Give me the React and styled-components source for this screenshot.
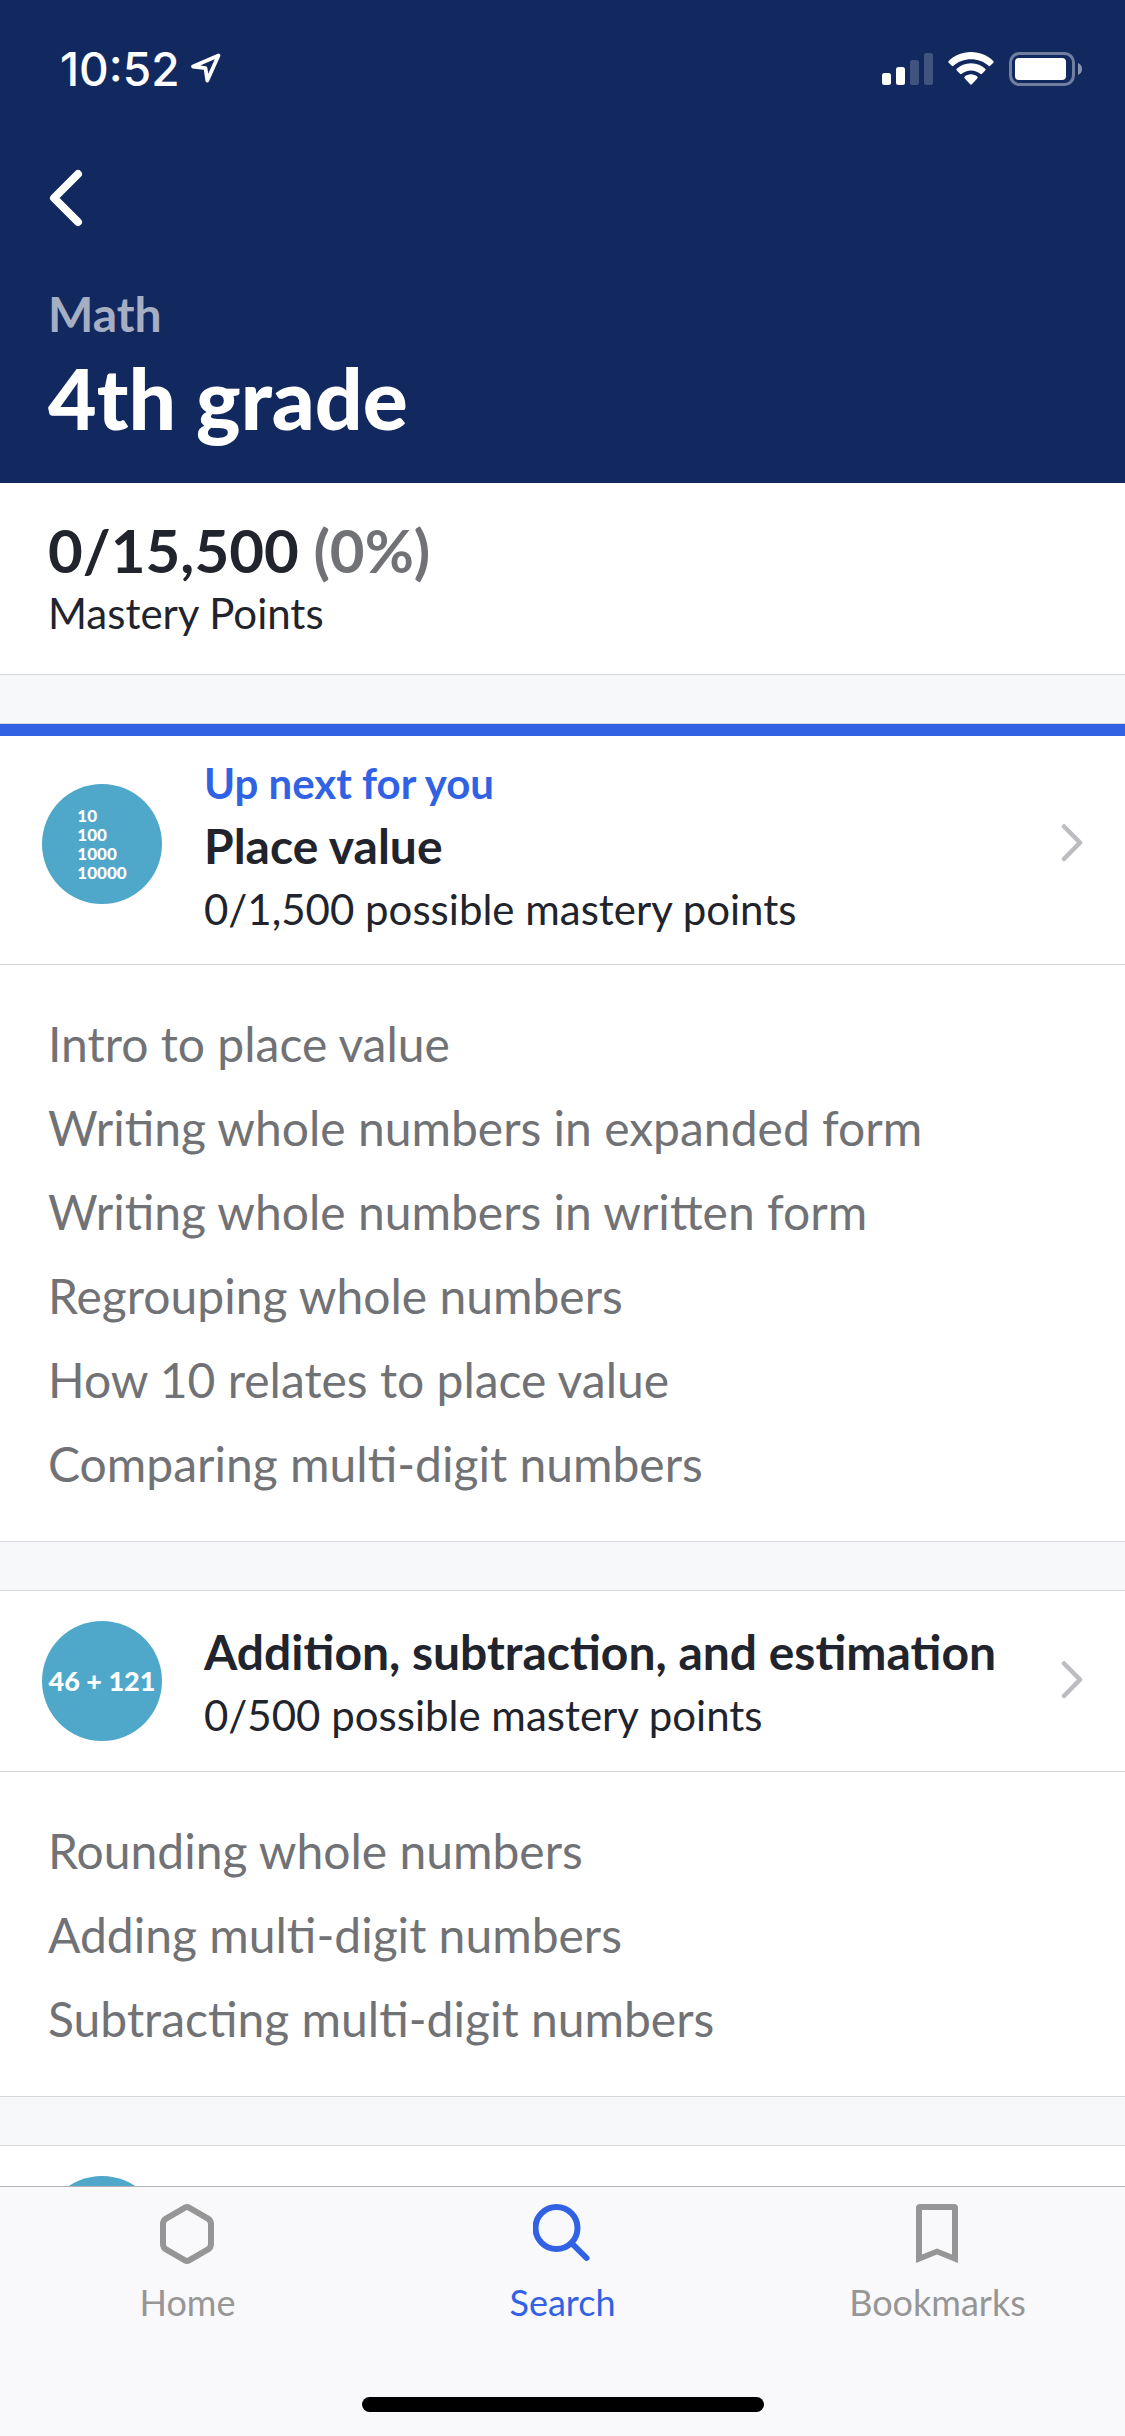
import React from "react";
import styled, { createGlobalStyle } from "styled-components";

const GlobalStyle = createGlobalStyle`
  :root {
    --navy: #122960;
    --blue: #3162e4;
    --teal: #4fa8c9;
    --ink: #21242c;
    --muted: #717276;
    --line: #d6d7da;
    --backdrop: #f7f8fa;
  }
  * {
    box-sizing: border-box;
  }
  body {
    margin: 0;
    background: #ffffff;
    color: var(--ink);
    font-family: "Lato", sans-serif;
  }
  h1, h2, p, ul {
    margin: 0;
    padding: 0;
  }
  svg {
    display: block;
    flex: none;
  }
`;

const Screen = styled.div`
  display: flex;
  flex-direction: column;
  height: 100vh;
  overflow: hidden;
`;

const Header = styled.header`
  flex: none;
  background: var(--navy);
  color: #ffffff;
  padding-bottom: 35px;
`;

const StatusBar = styled.div`
  display: flex;
  align-items: center;
  justify-content: space-between;
  height: 132px;
  padding: 6px 43px 0 60px;
`;

const StatusGroup = styled.div`
  display: flex;
  align-items: center;
  gap: ${(props) => props.$gap};
`;

const Time = styled.span`
  font-family: "Inter", sans-serif;
  font-size: 46px;
  font-weight: 500;
  line-height: 52px;
`;

const NavBar = styled.nav`
  display: flex;
  align-items: center;
  height: 132px;
  padding: 0 48px;
`;

const BackButton = styled.button`
  border: 0;
  padding: 0;
  background: none;
  color: inherit;
`;

const Heading = styled.div`
  padding: 20px 48px 0;
`;

const Subject = styled.p`
  color: rgba(255, 255, 255, 0.64);
  font-size: 48px;
  font-weight: 700;
  line-height: 60px;
  padding-bottom: 4px;
`;

const Title = styled.h1`
  font-size: 84px;
  font-weight: 900;
  line-height: 100px;
`;

const Content = styled.main`
  flex: 1;
  min-height: 0;
  overflow: hidden;
`;

const Summary = styled.section`
  padding: 31px 48px 34px;
`;

const Points = styled.p`
  font-size: 60px;
  font-weight: 700;
  line-height: 72px;
  span {
    color: var(--muted);
  }
`;

const PointsLabel = styled.p`
  font-size: 42px;
  line-height: 54px;
`;

const Divider = styled.div`
  height: 50px;
  background: var(--backdrop);
  border: solid var(--line);
  border-width: 1px 0;
`;

const UnitLink = styled.a`
  display: flex;
  align-items: center;
  gap: 42px;
  min-height: ${(props) => (props.$featured ? "240px" : "180px")};
  padding: 0 42px;
  color: inherit;
  text-decoration: none;
  box-shadow: ${(props) =>
    props.$featured ? "inset 0 12px 0 var(--blue)" : "none"};
`;

const Badge = styled.div`
  flex: none;
  display: flex;
  align-items: center;
  justify-content: center;
  width: 120px;
  height: 120px;
  border-radius: 50%;
  background: var(--teal);
  color: #ffffff;
  font-size: ${(props) => (props.$small ? "17px" : "27px")};
  font-weight: 900;
  line-height: ${(props) => (props.$small ? "19px" : "32px")};
  white-space: pre;
`;

const UnitText = styled.div`
  flex: 1;
  display: flex;
  flex-direction: column;
  gap: 3px;
  padding-top: 4px;
  line-height: 60px;
`;

const UpNext = styled.p`
  color: var(--blue);
  font-size: 42px;
  font-weight: 700;
`;

const UnitTitle = styled.h2`
  font-size: 48px;
  font-weight: 700;
`;

const UnitPoints = styled.p`
  font-size: 42px;
`;

const Lessons = styled.ul`
  list-style: none;
  border-top: 1px solid var(--line);
  padding: 37px 48px 35px;
`;

const Lesson = styled.li`
  color: var(--muted);
  font-size: 48px;
  line-height: 84px;
`;

const TabBar = styled.footer`
  flex: none;
  border-top: 1px solid #b3b2b6;
  background: #f9f9fb;
  padding: 17px 0 24px;
`;

const Tabs = styled.nav`
  display: grid;
  grid-template-columns: repeat(3, 1fr);
`;

const Tab = styled.a`
  display: flex;
  flex-direction: column;
  align-items: center;
  gap: 16px;
  color: ${(props) => (props.$active ? "var(--blue)" : "#969697")};
  font-size: 36px;
  line-height: 44px;
  text-decoration: none;
`;

const HomeIndicator = styled.div`
  width: 402px;
  height: 15px;
  margin: 73px auto 0;
  border-radius: 8px;
  background: #000000;
`;

const LocationIcon = () => (
  <svg width="32" height="32" viewBox="0 0 32 32" fill="none" stroke="currentColor" strokeWidth="3.8" strokeLinejoin="round">
    <path d="M28.500 2.500 3 13.500 15.500 15.200 17.300 27.500Z" />
  </svg>
);

const SignalIcon = () => (
  <svg width="52" height="34" viewBox="0 0 52 34" fill="#ffffff">
    <rect x="0" y="21" width="9" height="12" rx="2.5" />
    <rect x="14" y="15" width="9" height="18" rx="2.5" />
    <rect x="28" y="8" width="9" height="25" rx="2.5" opacity="0.2" />
    <rect x="42" y="1" width="9" height="32" rx="2.5" opacity="0.2" />
  </svg>
);

const WifiIcon = () => (
  <svg width="46" height="34" viewBox="0 0 46 34" fill="#ffffff">
    <path d="M23 0C32 0 39.800 3.500 45.300 8.900Q46.200 9.800 45.300 10.700L42.200 13.800Q41.400 14.600 40.500 13.800C35.800 9.500 29.700 7.200 23 7.200S10.200 9.500 5.500 13.800Q4.600 14.600 3.800 13.800L.7 10.700Q-.2 9.800 .7 8.900C6.200 3.500 14 0 23 0Z" />
    <path d="M23 11.300C28.800 11.300 33.700 13.500 37.200 16.700Q38.200 17.600 37.200 18.600L34 21.800Q33.200 22.600 32.300 21.800C29.800 19.700 26.600 18.400 23 18.400S16.200 19.700 13.700 21.800Q12.800 22.600 12 21.800L8.800 18.600Q7.800 17.600 8.800 16.700C12.300 13.500 17.200 11.300 23 11.300Z" />
    <path d="M23 22.300C25.500 22.300 27.700 23.200 29.200 24.600Q30.200 25.500 29.200 26.500L23.900 32.300Q23 33.200 22.100 32.300L16.800 26.500Q15.800 25.500 16.800 24.600C18.300 23.200 20.500 22.300 23 22.300Z" />
  </svg>
);

const BatteryIcon = () => (
  <svg width="74" height="34" viewBox="0 0 74 34">
    <rect x="2.500" y="1.500" width="63" height="31" rx="9" fill="none" stroke="#ffffff" strokeWidth="3" opacity="0.4" />
    <rect x="7" y="6" width="51" height="22" rx="4" fill="#ffffff" />
    <path d="M70 11C72.500 12 74 14.300 74 17S72.500 22 70 23Z" fill="#ffffff" opacity="0.5" />
  </svg>
);

const BackIcon = () => (
  <svg width="36" height="60" viewBox="0 0 36 60" fill="none" stroke="currentColor" strokeWidth="8" strokeLinecap="round" strokeLinejoin="round">
    <path d="M30 6 6 30 30 54" />
  </svg>
);

const ChevronIcon = () => (
  <svg width="22" height="42" viewBox="0 0 22 42" fill="none" stroke="#bcbdc0" strokeWidth="4.500" strokeLinecap="round" strokeLinejoin="round">
    <path d="M3 3.500 19 19.700 3 36" />
  </svg>
);

const HomeIcon = () => (
  <svg width="60" height="60" viewBox="0 0 60 60" fill="none" stroke="currentColor" strokeWidth="6" strokeLinejoin="round">
    <path d="M27 3.600Q29 2.500 31 3.600L50 14.600Q53 16.500 53 20V40Q53 43.500 50 45.400L31 56.400Q29 57.500 27 56.400L8 45.400Q5 43.500 5 40V20Q5 16.500 8 14.600Z" />
  </svg>
);

const SearchIcon = () => (
  <svg width="60" height="60" viewBox="0 0 60 60" fill="none" stroke="currentColor" strokeWidth="6" strokeLinecap="round">
    <circle cx="23.500" cy="24" r="21" />
    <path d="M38.500 39 53.500 54" />
  </svg>
);

const BookmarkIcon = () => (
  <svg width="60" height="60" viewBox="0 0 60 60" fill="currentColor">
    <path fillRule="evenodd" d="M12 0H46Q50 0 50 4V59L29 50.500 8 59V4Q8 0 12 0ZM14 6V50.500L29 44.500 44 50.500V6Z" />
  </svg>
);

const units = [
  {
    title: "Place value",
    points: "0/1,500 possible mastery points",
    badge: "10\n100\n1000\n10000",
    featured: true,
    lessons: [
      "Intro to place value",
      "Writing whole numbers in expanded form",
      "Writing whole numbers in written form",
      "Regrouping whole numbers",
      "How 10 relates to place value",
      "Comparing multi-digit numbers",
    ],
  },
  {
    title: "Addition, subtraction, and estimation",
    points: "0/500 possible mastery points",
    badge: "46 + 121",
    lessons: [
      "Rounding whole numbers",
      "Adding multi-digit numbers",
      "Subtracting multi-digit numbers",
    ],
  },
];

const tabs = [
  { label: "Home", icon: <HomeIcon /> },
  { label: "Search", icon: <SearchIcon />, active: true },
  { label: "Bookmarks", icon: <BookmarkIcon /> },
];

export default function App() {
  return (
    <Screen>
      <GlobalStyle />
      <Header>
        <StatusBar>
          <StatusGroup $gap='10px'>
            <Time>10:52</Time>
            <LocationIcon />
          </StatusGroup>
          <StatusGroup $gap='14px'>
            <SignalIcon />
            <WifiIcon />
            <BatteryIcon />
          </StatusGroup>
        </StatusBar>
        <NavBar>
          <BackButton aria-label='Back'>
            <BackIcon />
          </BackButton>
        </NavBar>
        <Heading>
          <Subject>Math</Subject>
          <Title>4th grade</Title>
        </Heading>
      </Header>
      <Content>
        <Summary>
          <Points>
            0/15,500 <span>(0%)</span>
          </Points>
          <PointsLabel>Mastery Points</PointsLabel>
        </Summary>
        {units.map((unit) => (
          <section key={unit.title}>
            <Divider />
            <UnitLink href='#' $featured={unit.featured}>
              <Badge $small={unit.featured}>{unit.badge}</Badge>
              <UnitText>
                {unit.featured && <UpNext>Up next for you</UpNext>}
                <UnitTitle>{unit.title}</UnitTitle>
                <UnitPoints>{unit.points}</UnitPoints>
              </UnitText>
              <ChevronIcon />
            </UnitLink>
            <Lessons>
              {unit.lessons.map((lesson) => (
                <Lesson key={lesson}>{lesson}</Lesson>
              ))}
            </Lessons>
          </section>
        ))}
        <Divider />
        <UnitLink as='div'>
          <Badge />
        </UnitLink>
      </Content>
      <TabBar>
        <Tabs>
          {tabs.map((tab) => (
            <Tab key={tab.label} href='#' $active={tab.active}>
              {tab.icon}
              {tab.label}
            </Tab>
          ))}
        </Tabs>
        <HomeIndicator />
      </TabBar>
    </Screen>
  );
}
